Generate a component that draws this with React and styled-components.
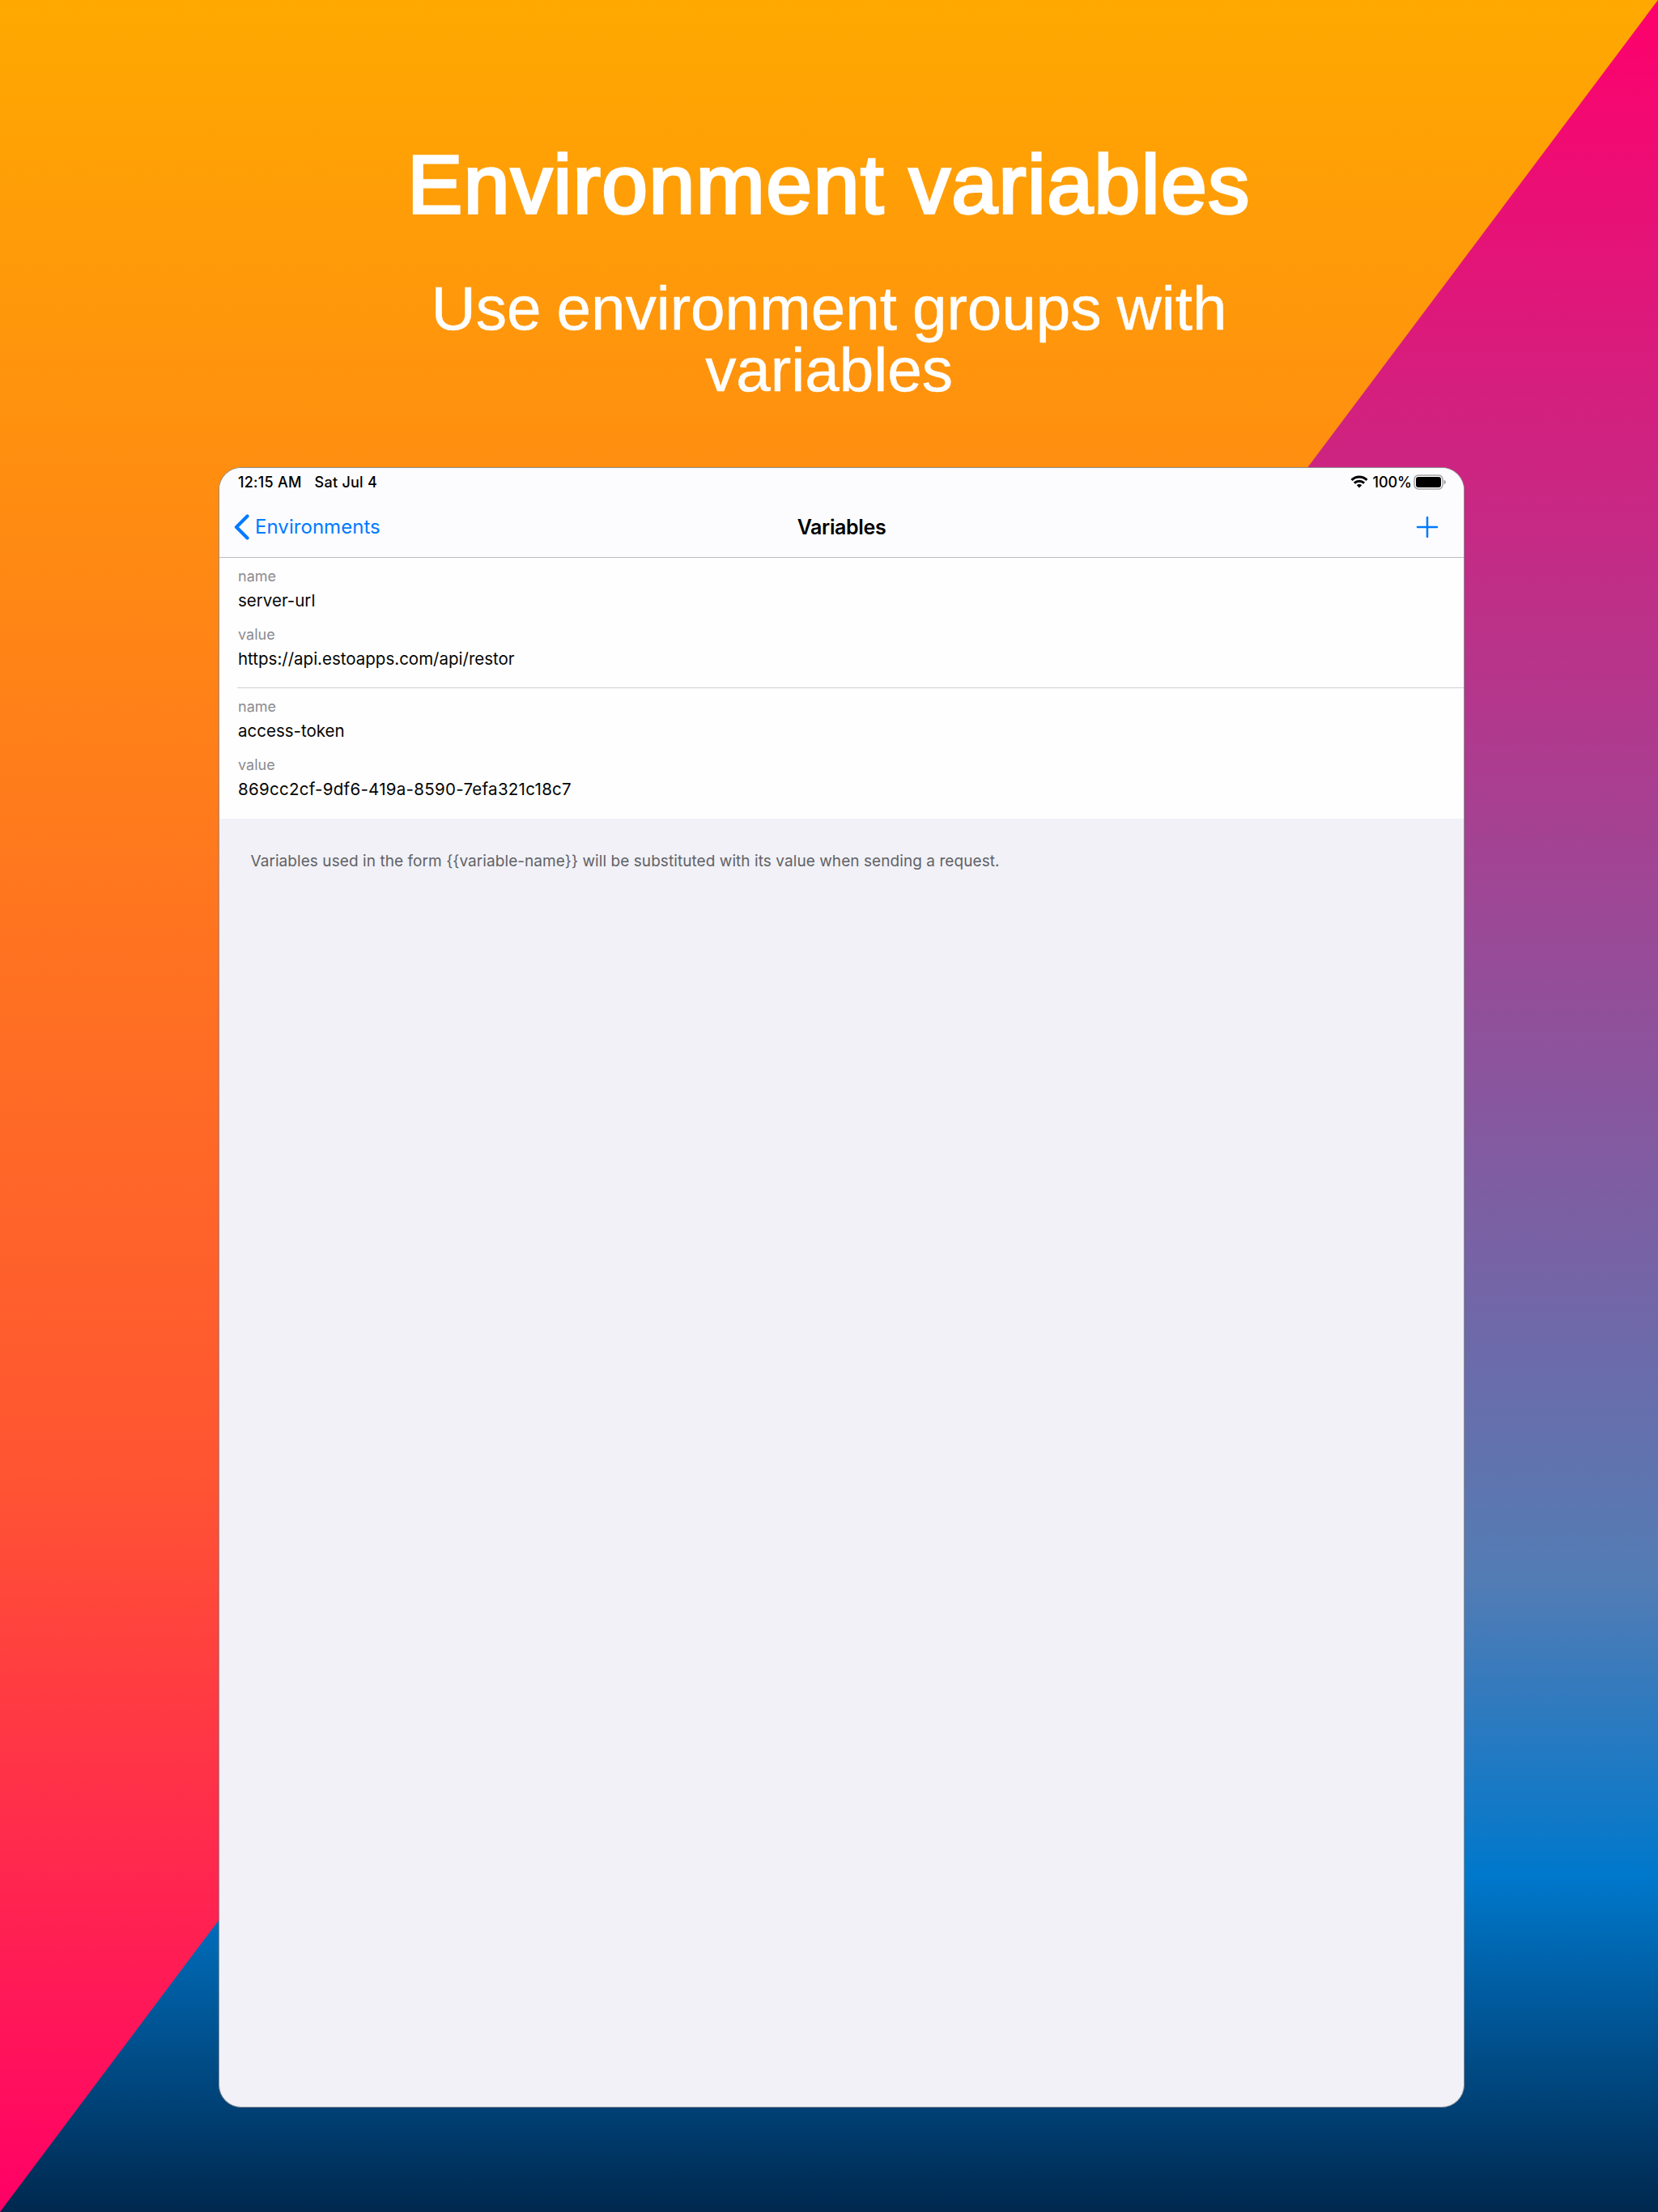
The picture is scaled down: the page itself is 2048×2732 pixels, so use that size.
import React from "react";
import styled, { createGlobalStyle } from "styled-components";

const Global = createGlobalStyle`
  * { box-sizing: border-box; }
  body { margin: 0; font-family: Inter, "Liberation Sans", sans-serif; }
`;

const Poster = styled.main`
  position: relative;
  isolation: isolate;
  width: 2048px;
  height: 2732px;
  padding-top: 170px;
  display: flex;
  flex-direction: column;
  overflow: hidden;
  background: linear-gradient(180deg, #ff006c 0%, #547cb4 71.2%, #0078cc 84.8%, #00284e 100%);
`;

const Diagonal = styled.div`
  position: absolute;
  inset: 0;
  z-index: -1;
  clip-path: polygon(0 0, 100% 0, 0 100%);
  background: linear-gradient(180deg, #ffa900 0%, #ff5532 66.5%, #ff0066 100%);
`;

const Heading = styled.header`
  height: 407px;
  color: #fff;
  text-align: center;
  font-family: "Liberation Sans", sans-serif;
  display: flex;
  flex-direction: column;
  align-items: center;
`;

const Title = styled.h1`
  margin: 0;
  font-size: 102px;
  line-height: 117px;
  font-weight: 400;
  -webkit-text-stroke: 3.4px #fff;
  letter-spacing: 1.55px;
  white-space: nowrap;
`;

const Subtitle = styled.p`
  margin: 56px 0 0;
  width: 1100px;
  font-size: 76.5px;
  line-height: 76px;
  letter-spacing: -0.05px;
  word-spacing: -2.2px;
  -webkit-text-stroke: 0.5px #fff;
`;

const Screen = styled.section`
  width: 1539px;
  height: 2026px;
  margin-left: 270px;
  border: 1px solid #8f8f93;
  border-radius: 28px;
  overflow: hidden;
  background: #f1f1f7;
`;

const TopArea = styled.div`
  height: 111px;
  background: #fcfcfe;
  border-bottom: 1px solid #bcbcbe;
`;

const StatusBar = styled.div`
  height: 34px;
  padding: 0 22px 0 23px;
  display: flex;
  align-items: center;
  justify-content: space-between;
  font-size: 18px;
  font-weight: 500;
`;

const StatusGroup = styled.div`
  display: flex;
  align-items: center;
  gap: ${(p) => p.$gap}px;
  letter-spacing: ${(p) => p.$spacing || 0}px;
`;

const BatteryIcon = styled.svg`
  margin-left: -3px;
`;

const NavBar = styled.nav`
  height: 76px;
  padding: 1px 18px 0;
  display: grid;
  grid-template-columns: 1fr auto 1fr;
  align-items: center;
`;

const Back = styled.a`
  color: #007aff;
  display: flex;
  align-items: center;
  gap: 7px;
  font-size: 24px;
  letter-spacing: 0.05px;
`;

const NavTitle = styled.h2`
  margin: 0;
  font-size: 25px;
  font-weight: 600;
  letter-spacing: -0.35px;
`;

const AddIcon = styled.svg`
  justify-self: end;
  margin-right: 13px;
`;

const List = styled.ul`
  margin: 0;
  padding: 0 0 0 22px;
  height: 322px;
  list-style: none;
  background: #fefefe;
`;

const Item = styled.li`
  height: 161px;
  padding: 10.5px 0 0 1px;
  border-bottom: ${(p) => (p.$last ? "0" : "1px solid #d0d0d2")};
`;

const Field = styled.div`
  height: 72px;
`;

const Label = styled.div`
  font-size: 18px;
  line-height: 24px;
  color: #8b8b90;
`;

const Value = styled.div`
  margin-top: 3px;
  font-size: 20.5px;
  line-height: 30px;
  color: #050505;
  letter-spacing: ${(p) => p.$spacing || 0}px;
`;

const Note = styled.p`
  margin: 39px 0 0 38.5px;
  font-size: 19px;
  line-height: 28px;
  letter-spacing: 0.065px;
  color: #626266;
`;

const variables = [
  { name: "server-url", value: "https://api.estoapps.com/api/restor", spacing: 0 },
  { name: "access-token", value: "869cc2cf-9df6-419a-8590-7efa321c18c7", spacing: 0.28 },
];

const Wifi = () => (
  <svg width="22" height="16" viewBox="0 0 22 16" fill="none" stroke="#000" strokeWidth="3">
    <path d="M1.5 5.9C7 .7 15 .7 20.5 5.9" />
    <path d="M4.9 9.7C8.4 6.5 13.6 6.5 17.1 9.7" />
    <path d="M7.8 12.2C9.6 10.7 12.4 10.7 14.2 12.2L11 15.5Z" fill="#000" stroke="none" />
  </svg>
);

const Battery = () => (
  <BatteryIcon width="40" height="19" viewBox="0 0 40 19">
    <rect x="1" y="1" width="35" height="17" rx="5" fill="#fff" stroke="#a3a3a5" strokeWidth="1.5" />
    <rect x="3" y="3" width="31" height="13" rx="3" fill="#000" />
    <path d="M37.5 6.5Q40 7.5 40 9.5T37.5 12.5Z" fill="#a3a3a5" />
  </BatteryIcon>
);

export default function App() {
  return (
    <Poster>
      <Global />
      <Diagonal />
      <Heading>
        <Title>Environment variables</Title>
        <Subtitle>Use environment groups with variables</Subtitle>
      </Heading>
      <Screen>
        <TopArea>
          <StatusBar>
            <StatusGroup $gap={16} $spacing={0.25}>
              <span>12:15 AM</span>
              <span>Sat Jul 4</span>
            </StatusGroup>
            <StatusGroup $gap={5}>
              <Wifi />
              <span>100%</span>
              <Battery />
            </StatusGroup>
          </StatusBar>
          <NavBar>
            <Back>
              <svg width="19" height="32" viewBox="0 0 19 32" fill="none" stroke="#007aff" strokeWidth="4.2" strokeLinecap="round" strokeLinejoin="round">
                <path d="M16.5 2.5L3 16L16.5 29.5" />
              </svg>
              <span>Environments</span>
            </Back>
            <NavTitle>Variables</NavTitle>
            <AddIcon width="28" height="28" viewBox="0 0 28 28" stroke="#007aff" strokeWidth="2.5" strokeLinecap="round">
              <path d="M14 2V26M2 14H26" />
            </AddIcon>
          </NavBar>
        </TopArea>
        <List>
          {variables.map((v, i) => (
            <Item key={v.name} $last={i === variables.length - 1}>
              <Field>
                <Label>name</Label>
                <Value>{v.name}</Value>
              </Field>
              <Field>
                <Label>value</Label>
                <Value $spacing={v.spacing}>{v.value}</Value>
              </Field>
            </Item>
          ))}
        </List>
        <Note>{"Variables used in the form {{variable-name}} will be substituted with its value when sending a request."}</Note>
      </Screen>
    </Poster>
  );
}
